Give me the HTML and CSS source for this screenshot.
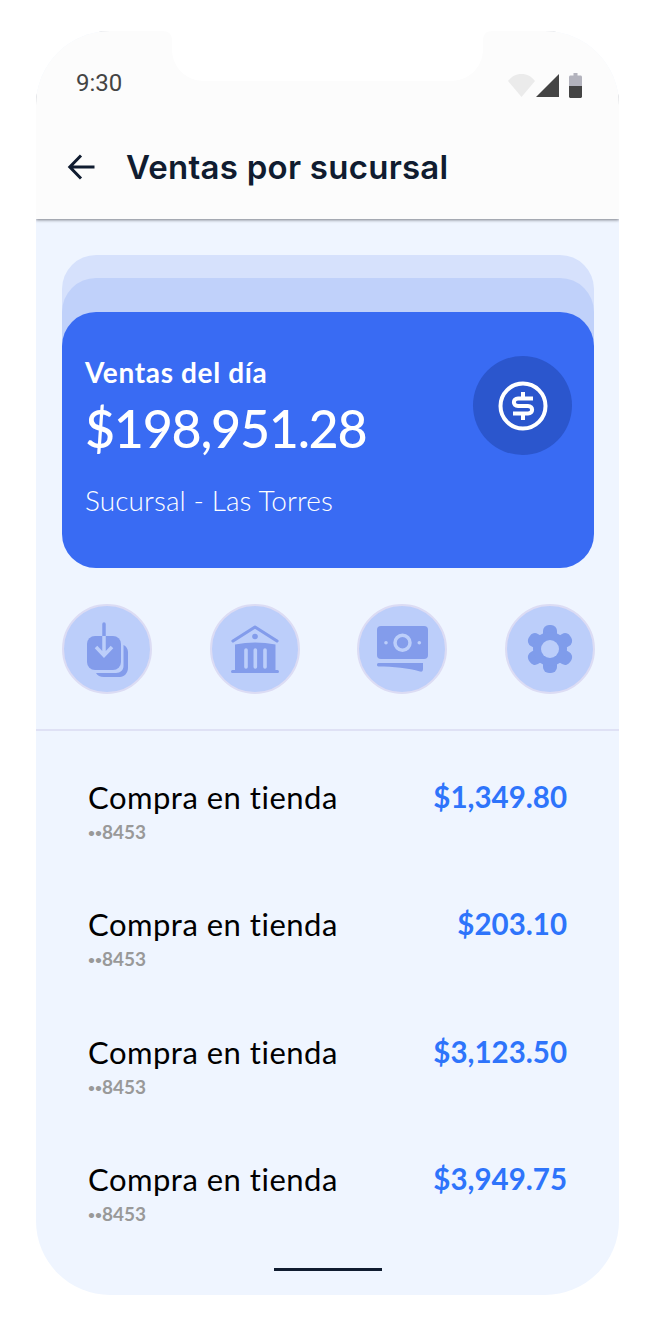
FILE: index.html
```html
<!DOCTYPE html>
<html lang="es">
<head>
    <meta charset="UTF-8">
    <meta name="viewport" content="width=device-width, initial-scale=1.0">
    <title>Ventas por sucursal</title>
    <link rel="stylesheet" href="styles.css">
</head>
<body>
    <div class="phone">
        <svg class="notch" width="331" height="50" viewBox="0 0 331 50"><path d="M0 0C7 0 10 3 10 10V18C10 36 24 50 42 50H289C307 50 321 36 321 18V10C321 3 324 0 331 0Z" fill="#fff"/></svg>

        <header class="topbar">
            <div class="status">
                <span class="time">9:30</span>
                <div class="status-icons">
                    <svg width="27" height="23" viewBox="0 0 27 23"><path d="M0 7C3.500 2.500 8 0 13.500 0S23.500 2.500 27 7L13.500 23Z" fill="#ebebeb"/></svg>
                    <svg width="23" height="23" viewBox="0 0 23 23"><path d="M0 23 23 0V23Z" fill="#444"/></svg>
                    <svg class="battery" width="13" height="25" viewBox="0 0 13 25"><path d="M4.500 0H8.500V2.500H11.500C12.300 2.500 13 3.200 13 4V13H0V4C0 3.200 .7 2.500 1.500 2.500H4.500Z" fill="#b3b3bd"/><path d="M0 13H13V23.500C13 24.300 12.300 25 11.500 25H1.500C.7 25 0 24.300 0 23.500Z" fill="#444"/></svg>
                </div>
            </div>
            <div class="title-row">
                <svg class="back" width="30" height="30" viewBox="0 0 30 30"><path d="M27.500 15H3.500M14 3.500 2.800 15 14 26.500" fill="none" stroke="#101c30" stroke-width="3"/></svg>
                <h1>Ventas por sucursal</h1>
            </div>
        </header>

        <main class="content">
            <section class="card-stack">
                <div class="layer layer-back"></div>
                <div class="layer layer-mid"></div>
                <div class="card">
                    <div class="card-text">
                        <p class="card-label">Ventas del día</p>
                        <p class="card-total">$198,951.28</p>
                        <p class="card-branch">Sucursal - Las Torres</p>
                    </div>
                    <div class="card-icon">
                        <svg width="50" height="50" viewBox="0 0 50 50" fill="none" stroke="#fff" stroke-width="4">
                            <circle cx="25" cy="25" r="22.500"/>
                            <path d="M35 17.500H20C14.500 17.500 14.500 25 20 25H30C35.500 25 35.500 32.500 30 32.500H15M25 11V17.500M25 32.500V39"/>
                        </svg>
                    </div>
                </div>
            </section>

            <section class="actions">
                <button class="action">
                    <svg width="41" height="55" viewBox="0 0 41 55" fill="#839ceb">
                        <path d="M36.500 23C39 24 41 27 41 30V46C41 51 37 55 33 55H17C13 55 10.500 53.500 9 51H29C33.500 51 36.500 48 36.500 44Z"/>
                        <rect x="0" y="14" width="34" height="34" rx="8"/>
                        <path d="M17 2V14" stroke="#839ceb" stroke-width="3.500" stroke-linecap="round"/>
                        <path d="M17 14V33M9 25 17 33.500 25 25" fill="none" stroke="#bccefa" stroke-width="3.500"/>
                    </svg>
                </button>
                <button class="action">
                    <svg width="48" height="48" viewBox="0 0 48 48" fill="#839ceb">
                        <path d="M2 16 24 2 46 16" fill="none" stroke="#839ceb" stroke-width="3.200" stroke-linecap="round" stroke-linejoin="round"/>
                        <circle cx="24" cy="11.500" r="2.800"/>
                        <path d="M4 19.500Q24 15.500 44.500 19.500V45H4Z"/>
                        <rect x="0" y="45" width="48" height="3" rx="1.500"/>
                        <path d="M15 25V42M24.300 25V42M34 25V42" stroke="#bccefa" stroke-width="3.600" stroke-linecap="round"/>
                    </svg>
                </button>
                <button class="action">
                    <svg width="51" height="46" viewBox="0 0 51 46" fill="#839ceb">
                        <rect x="0" y="0" width="51" height="33" rx="4"/>
                        <circle cx="25.500" cy="16.700" r="7.500" fill="none" stroke="#bccefa" stroke-width="3.500"/>
                        <circle cx="9" cy="16.700" r="1.800" fill="#bccefa"/>
                        <circle cx="42.300" cy="16.700" r="1.800" fill="#bccefa"/>
                        <path d="M1.500 37H46V43C46 45 45 46 43 45.500 32 42 16 40.500 1.500 40.500 -.5 40.500 -.5 37 1.500 37Z"/>
                    </svg>
                </button>
                <button class="action">
                    <svg width="48" height="48" viewBox="0 0 48 48" fill="#7f9ceb">
                        <rect x="17" y="0" width="14" height="48" rx="6"/>
                        <rect x="17" y="0" width="14" height="48" rx="6" transform="rotate(60 24 24)"/>
                        <rect x="17" y="0" width="14" height="48" rx="6" transform="rotate(120 24 24)"/>
                        <circle cx="24" cy="24" r="17"/>
                        <circle cx="24" cy="24" r="9" fill="#bccefa"/>
                    </svg>
                </button>
            </section>

            <ul class="movements">
                <li class="movement">
                    <div>
                        <p class="movement-name">Compra en tienda</p>
                        <p class="movement-card"><span class="dots">••</span>8453</p>
                    </div>
                    <span class="movement-amount">$1,349.80</span>
                </li>
                <li class="movement">
                    <div>
                        <p class="movement-name">Compra en tienda</p>
                        <p class="movement-card"><span class="dots">••</span>8453</p>
                    </div>
                    <span class="movement-amount">$203.10</span>
                </li>
                <li class="movement">
                    <div>
                        <p class="movement-name">Compra en tienda</p>
                        <p class="movement-card"><span class="dots">••</span>8453</p>
                    </div>
                    <span class="movement-amount">$3,123.50</span>
                </li>
                <li class="movement">
                    <div>
                        <p class="movement-name">Compra en tienda</p>
                        <p class="movement-card"><span class="dots">••</span>8453</p>
                    </div>
                    <span class="movement-amount">$3,949.75</span>
                </li>
            </ul>
            <div class="home-bar"></div>
        </main>
    </div>
</body>
</html>
```

FILE: styles.css
```css
* {
    box-sizing: border-box;
}
body {
    margin: 0;
    background: #fff;
    font-family: Lato, Arial, sans-serif;
}
p, h1, ul {
    margin: 0;
    padding: 0;
}
.phone {
    position: relative;
    width: 583px;
    height: 1264px;
    margin: 31px 0 31px 36px;
    border-radius: 74px;
    overflow: hidden;
    background: #eff5ff;
    display: flex;
    flex-direction: column;
}
.notch {
    position: absolute;
    top: 0;
    left: 126px;
    z-index: 2;
}
.topbar {
    height: 188px;
    background: #fcfcfc;
    box-shadow: 0 1px 3px rgba(40, 40, 50, 0.6);
    padding: 40px 37px 0 31px;
    position: relative;
}
.status {
    display: flex;
    justify-content: space-between;
    align-items: flex-start;
}
.time {
    margin-left: 9px;
    font-family: Roboto, sans-serif;
    font-size: 24px;
    line-height: 24px;
    color: #444;
}
.status-icons {
    display: flex;
    align-items: flex-start;
    gap: 1px;
    margin-top: 3px;
}
.battery {
    margin: -1px 0 0 9px;
}
.title-row {
    display: flex;
    align-items: center;
    gap: 29px;
    margin-top: 49px;
    height: 40px;
}
h1 {
    font-family: Inter, sans-serif;
    font-size: 33px;
    font-weight: 600;
    letter-spacing: 0.25px;
    color: #101c30;
}
.content {
    flex: 1;
    padding-top: 36px;
    display: flex;
    flex-direction: column;
}
.card-stack {
    position: relative;
    margin: 0 25px 0 26px;
    padding-top: 57px;
}
.layer {
    position: absolute;
    left: 0;
    right: 0;
    height: 120px;
    border-radius: 34px;
}
.layer-back {
    top: 0;
    background: #d6e1fc;
}
.layer-mid {
    top: 23px;
    background: #c0d1fa;
}
.card {
    position: relative;
    height: 256px;
    border-radius: 34px;
    background: #396bf3;
    color: #fff;
    padding: 43px 22px 0 23px;
    display: flex;
    justify-content: space-between;
    align-items: flex-start;
}
.card-label {
    font-size: 28px;
    line-height: 34px;
    font-weight: 700;
    letter-spacing: 0.65px;
}
.card-total {
    font-size: 52px;
    line-height: 64px;
    font-weight: 500;
    letter-spacing: -1.3px;
    margin-top: 7px;
}
.card-branch {
    font-size: 28px;
    line-height: 36px;
    font-weight: 300;
    letter-spacing: 0.1px;
    margin-top: 22px;
}
.card-icon {
    width: 99px;
    height: 99px;
    margin-top: 1px;
    border-radius: 50%;
    background: #2b56cd;
    display: flex;
    align-items: center;
    justify-content: center;
}
.actions {
    display: flex;
    justify-content: space-between;
    margin: 36px 24px 0 26px;
}
.action {
    width: 90px;
    height: 90px;
    padding: 0;
    border: 2px solid #dcdcf4;
    border-radius: 50%;
    background: #bccefa;
    display: flex;
    align-items: center;
    justify-content: center;
}
.movements {
    list-style: none;
    margin-top: 35px;
    border-top: 2px solid #dfe1f5;
    padding: 46px 52px 0;
    display: flex;
    flex-direction: column;
    gap: 53.3px;
}
.movement {
    display: flex;
    justify-content: space-between;
    align-items: flex-start;
    height: 74px;
}
.movement-name {
    font-size: 31px;
    line-height: 40px;
    letter-spacing: 0.5px;
    color: #000;
}
.movement-card {
    font-size: 19px;
    line-height: 24px;
    font-weight: 700;
    margin-top: 3px;
    color: #999;
}
.dots {
    font-size: 12px;
    vertical-align: 2px;
}
.movement-amount {
    font-size: 29.5px;
    line-height: 40px;
    font-weight: 700;
    color: #2e74fb;
}
.home-bar {
    width: 108px;
    height: 3px;
    margin: auto auto 24px;
    background: #101c30;
}
```
